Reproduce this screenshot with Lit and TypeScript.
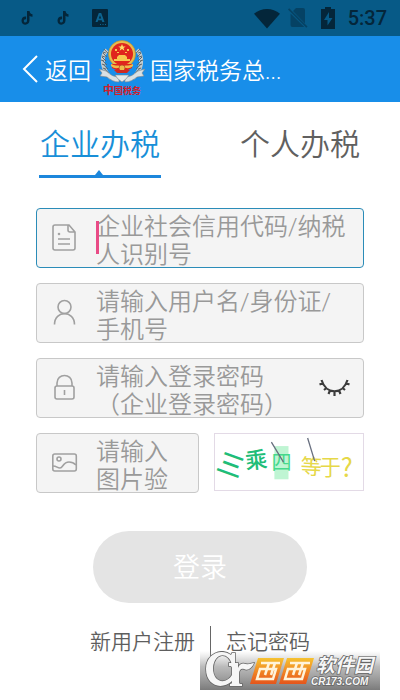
import { LitElement, html, css, svg } from "lit";
import { customElement, property, state } from "lit/decorators.js";
import { classMap } from "lit/directives/class-map.js";

const fonts = css`Roboto, "Noto Sans CJK SC", sans-serif`;

@customElement("status-bar")
class StatusBar extends LitElement {
  static styles = css`
    :host {
      display: flex;
      align-items: center;
      justify-content: space-between;
      height: 36px;
      padding: 0 13px 0 20px;
      background: #075a87;
      color: #04263a;
      font: 500 20px/36px ${fonts};
    }
    .group { display: flex; align-items: center; }
    .apps { gap: 22px; }
    .system { gap: 8px; }
    svg { display: block; fill: currentColor; }
    .dim { opacity: 0.45; }
    .letter { fill: #0d6490; }
  `;

  render() {
    const note = html`<svg width="14" height="16" viewBox="0 0 14 16" aria-hidden="true">
      <path d="M7 1h2.500c.2 2 1.300 3 3 3.200v2.500c-1.200 0-2.200-.4-3-1v4.600c0 5.700-8 5.700-8 .4 0-2.900 2.100-4.500 4.600-4.100v2.600c-3.100-.6-2.700 3.400-.7 3.200 1.100 0 1.600-.8 1.600-2z" />
    </svg>`;
    return html`
      <div class="group apps">
        ${note}${note}
        <svg width="16" height="18" viewBox="0 0 16 18" aria-hidden="true">
          <rect width="16" height="18" rx="1" />
          <path class="letter" d="M6.800 4h2.400l3.300 9h-2.200l-.6-1.800H6.200L5.600 13H3.500zM8 6.200 6.800 9.600h2.400zM8 15h1v1H8zM10.500 15h1v1h-1zM13 15h1v1h-1z" />
        </svg>
      </div>
      <div class="group system">
        <svg width="26" height="21" viewBox="0 0 27 21" aria-hidden="true">
          <path d="M0 5.500C7.500-1 19.500-1 27 5.500L13.500 21z" />
        </svg>
        <svg class="dim" width="20" height="20" viewBox="0 0 20 20" aria-hidden="true">
          <path d="M8 0h7q2 0 2 2v13.500L5 3zM2.500 5.500 16.300 19H4.500q-2 0-2-2z" />
          <path d="m0 1.500 1.200-1.200L19.500 18.500l-1.200 1.200z" />
        </svg>
        <svg width="24" height="22" viewBox="0 0 24 22" aria-hidden="true">
          <path fill-rule="evenodd" d="M9 0h6v2h4v20H5V2h4zM13 5l-5 8h3.500v5.500L16.500 11H13z" />
        </svg>
        <span class="time">5:37</span>
      </div>
    `;
  }
}

@customElement("tax-emblem")
class TaxEmblem extends LitElement {
  static styles = css`
    :host { display: block; }
    svg { display: block; }
    .motto { font: 700 9px "Noto Sans CJK SC", sans-serif; fill: #d0202a; }
    .lead { font-size: 11px; }
  `;

  render() {
    const leaves = [0, 1, 2, 3, 4, 5, 6];
    return html`
      <svg width="48" height="60" viewBox="0 0 48 60" role="img" aria-label="中国税务">
        ${[1, -1].map(
          (side) => svg`<g transform=${`translate(24 0) scale(${side} 1)`}>
            <path d="M15 11c7 7 5 20-4 28" fill="none" stroke="#c3ccd0" stroke-width="4" />
            ${leaves.map((i) => {
              const y = 11 + i * 4;
              const x = 19 - Math.abs(i - 2) * 0.9;
              return svg`<path d=${`M${x - 3} ${y + 3}l4-4M${x - 1} ${y + 3}l3-1`} stroke="#5b6669" stroke-width="1" />`;
            })}
            <path d="M3 38c7 0 10-4 13-6l7-2-3 4 2 3-7 1c-4 3-7 5-12 5z" fill="#d9e0e3" stroke="#7c878b" stroke-width=".6" />
          </g>`
        )}
        <path d="M17 36h14l-3 4-4 3-4-3z" fill="#e5e9e9" stroke="#788388" stroke-width=".6" />
        <circle cx="24" cy="15" r="13.500" fill="#e8bd4c" stroke="#c08a2a" stroke-width=".6" />
        <circle cx="24" cy="15" r="11" fill="#e0261d" />
        <path d="m24 5 1 2.500h2.700l-2.200 1.600.9 2.600-2.400-1.600-2.400 1.600.9-2.600-2.200-1.600H23z" fill="#ffe16a" />
        <path d="M17 10h2v2h-2zM29 10h2v2h-2zM19 13h2v1h-2zM27 13h2v1h-2zM19 18l2-2h6l2 2v2H19zM16 20h16v2H16z" fill="#f7c94f" />
        <path d="M14 25h20v4l-4 2H18l-4-2z" fill="#e0261d" />
        <path d="M13 25c3 2 7 1 9 2h4c2-1 6 0 9-2v2c-3 3-6 2-8 2h-6c-2 0-5 1-8-2z" fill="#eebd4a" />
        <circle cx="24" cy="29" r="3" fill="#eebd4a" stroke="#b3402a" stroke-width=".7" />
        <path d="M16 31h16l-3 3H19z" fill="#cf2a20" />
        <text class="motto" x="24" y="55" text-anchor="middle"><tspan class="lead">中</tspan>国税务</text>
      </svg>
    `;
  }
}

const icons: Record<string, unknown> = {
  document: svg`<path d="M4 1h13l6 7v16q0 2-2 2H3q-2 0-2-2V3q0-2 2-2zM16 1v5q0 2 2 2h5M6 15h12M6 20h12" /><circle cx="7" cy="10" r=".5" />`,
  user: svg`<circle cx="12.500" cy="8" r="6.500" /><path d="M2.500 25.500C2.500 11 22.500 11 22.500 25.500" />`,
  lock: svg`<rect x="3" y="12" width="19" height="13" rx="2" /><path d="M5 12V9c0-10 15-10 15 0v3M12.500 16v5" />`,
  picture: svg`<rect x=".8" y="5" width="23.500" height="17" rx="2" /><circle cx="7" cy="10" r="2" /><path d="M1 17c4 0 4 2 7 2s3-6 9-6c3 0 5 1 7 3" />`,
};

@customElement("form-field")
class FormField extends LitElement {
  @property() icon = "document";
  @property() hint = "";
  @property({ type: Boolean }) secret = false;
  @property({ type: Boolean, reflect: true }) current = false;
  @state() private revealed = false;

  static styles = css`
    :host { display: block; min-width: 0; }
    .box {
      position: relative;
      display: flex;
      box-sizing: border-box;
      height: 60px;
      padding-right: 12px;
      border: 1px solid #c8c8c8;
      border-radius: 4px;
      background: #f4f4f4;
      overflow: hidden;
    }
    .active { border-color: #2b8cb8; }
    .icon {
      flex: none;
      display: grid;
      place-items: center;
      width: 55px;
    }
    svg { display: block; fill: none; stroke: #a0a0a0; stroke-width: 1.6; }
    .entry {
      flex: 1;
      min-width: 0;
      margin: 0 0 0 4px;
      padding: 4px 0 0;
      border: 0;
      outline: 0;
      resize: none;
      overflow: hidden;
      background: none;
      color: #333;
      font: 350 24px/28px ${fonts};
    }
    .entry::placeholder { color: #999; opacity: 1; }
    .masked { -webkit-text-security: disc; }
    .caret {
      position: absolute;
      left: 59px;
      top: 12px;
      width: 3px;
      height: 33px;
      background: #e94b86;
    }
    .secret { padding-right: 10px; }
    .eye {
      flex: none;
      width: 34px;
      padding: 0;
      border: 0;
      background: none;
    }
    .eye svg { stroke: #3c3c3c; stroke-width: 2.200; }
  `;

  render() {
    return html`
      <div class=${classMap({ box: true, active: this.current, secret: this.secret })}>
        <label class="icon" for="entry">
          <svg width="26" height="28" viewBox="0 0 26 28" aria-hidden="true">${icons[this.icon]}</svg>
        </label>
        <textarea
          id="entry"
          class=${classMap({ entry: true, masked: this.secret && !this.revealed })}
          rows="2"
          aria-label=${this.hint}
          placeholder=${this.hint}
        ></textarea>
        ${this.current ? html`<span class="caret"></span>` : ""}
        ${this.secret
          ? html`<button class="eye" type="button" aria-label="显示密码" @click=${() => (this.revealed = !this.revealed)}>
              <svg width="32" height="18" viewBox="0 0 32 18" aria-hidden="true">
                <path d="M2.500 1C7 16 24 16 28.500 1M.5 5.500l4-1.500M5 11l3-2.500M9.500 15l1.500-3.500M15.500 17v-5M21.500 15 20 11.500M26 11 23 8.500M30.500 5.500l-4-1.500" />
              </svg>
            </button>`
          : ""}
      </div>
    `;
  }
}

@customElement("captcha-picture")
class CaptchaPicture extends LitElement {
  static styles = css`
    :host { display: block; }
    .frame {
      display: block;
      box-sizing: border-box;
      width: 100%;
      padding: 0;
      border: 1px solid #e3dae6;
      background: #fff;
    }
    svg { display: block; width: 100%; }
    text { font-family: "Noto Sans CJK SC", sans-serif; }
    .green { fill: #20bd78; }
    .mint { fill: #45d98b; }
    .yellow { fill: #e6d848; }
  `;

  render() {
    return html`
      <button class="frame" type="button" aria-label="换一张">
        <svg viewBox="0 0 147 56" aria-hidden="true">
          <text class="green" x="3" y="40" font-size="26" font-weight="500" transform="rotate(20 16 30)">三</text>
          <text class="green" x="30" y="34" font-size="22" font-weight="500" transform="rotate(-6 40 28)">乘</text>
          <rect x="59" y="12" width="14" height="33" fill="#bff5d3" />
          <text class="mint" x="56" y="36" font-size="20">四</text>
          <text class="yellow" x="85" y="40" font-size="21" transform="rotate(3 95 33)">等</text>
          <text class="yellow" x="104" y="41" font-size="21">于</text>
          <text class="yellow" x="125" y="43" font-size="25">?</text>
          <path d="m56 8 12 20M92 4l7 23" fill="none" stroke="#697080" stroke-width="1.300" />
        </svg>
      </button>
    `;
  }
}

@customElement("site-stamp")
class SiteStamp extends LitElement {
  static styles = css`
    :host { display: block; }
    svg { display: block; }
    .park { font: italic 700 19px/19px "Noto Sans CJK SC", sans-serif; }
    .site { font: italic 700 10px/10px "Liberation Sans", sans-serif; }
    .pale { fill: #f6f6f6; stroke: #666; stroke-width: 1.5; paint-order: stroke; }
  `;

  render() {
    return html`
      <svg width="180" height="39" viewBox="0 0 180 39" role="img" aria-label="西西软件园 CR173.COM">
        <defs>
          <linearGradient id="shade" x2="0" y2="1">
            <stop offset="0" stop-color="#bbb" stop-opacity="0" />
            <stop offset=".4" stop-color="#aaa" stop-opacity=".8" />
            <stop offset="1" stop-color="#7b7b7b" />
          </linearGradient>
          <linearGradient id="fire" x2="0" y2="1">
            <stop offset="0" stop-color="#f6c331" />
            <stop offset=".6" stop-color="#ef7d22" />
            <stop offset="1" stop-color="#e4551c" />
          </linearGradient>
        </defs>
        <rect width="180" height="39" fill="url(#shade)" />
        <path class="pale" d="M35 2v12h-3C29 0 14 1 13 17c0 15 13 17 19 7v-6c0-3-1-3-3-3v-3h9v5c2-5 5-5 8-4 3 1 5-1 8-1-2 5-6 8-10 6-3-1-5 1-5 5v8c0 2 1 2 3 2v2H30v-2c2 0 2-1 2-3C21 40 6 34 6 18 6 2 22-3 31 4l1-2z" />
        <path d="M58 7h26l-8 26H50zM87 7h27l-8 26H79z" fill="url(#fire)" />
        <path d="M61 12h19M90 12h20M69 12l-4 12M75 12l-4 12M97 12l-4 12M103 12l-4 12M60 18h16l-3 10H57zM88 18h17l-3 10H85z" fill="none" stroke="#fff4db" stroke-width="2.500" />
        <text class="pale park" x="116" y="21">软件园</text>
        <text class="pale site" x="111" y="34">CR173.COM</text>
      </svg>
    `;
  }
}

@customElement("app-root")
class AppRoot extends LitElement {
  @state() private tab = 0;

  static styles = css`
    :host {
      display: block;
      min-height: 100vh;
      background: #fff;
      font-family: ${fonts};
      font-weight: 350;
    }
    .header {
      display: flex;
      align-items: center;
      height: 66px;
      padding-left: 22px;
      background: #188ee9;
      color: #fff;
      font-size: 23px;
    }
    .back {
      display: flex;
      align-items: center;
      gap: 7px;
      padding: 0;
      border: 0;
      background: none;
      color: inherit;
      font: inherit;
    }
    .emblem { margin: 0 4px 0 7px; }
    .title {
      margin: 0;
      white-space: nowrap;
      font: inherit;
    }
    .tabs {
      display: flex;
      justify-content: space-between;
      padding: 20px 39px 0;
    }
    .tab {
      position: relative;
      width: 122px;
      height: 56px;
      padding: 0 0 7px;
      border: 0;
      border-bottom: 3px solid transparent;
      background: none;
      color: #606060;
      font: 350 30px/46px ${fonts};
      white-space: nowrap;
    }
    .chosen { border-color: #1c87dc; color: #188fd8; }
    .chosen::after {
      content: "";
      position: absolute;
      left: 50%;
      bottom: 0;
      margin-left: -5px;
      border: 4px solid transparent;
      border-top: 0;
      border-bottom-width: 5px;
      border-bottom-color: #1c87dc;
    }
    .form {
      display: grid;
      gap: 15px;
      padding: 30px 36px 0;
    }
    .pair {
      display: grid;
      grid-template-columns: 163fr 150fr;
      gap: 15px;
    }
    .login {
      justify-self: center;
      width: 65%;
      min-width: 214px;
      height: 72px;
      margin-top: 23px;
      border: 0;
      border-radius: 36px;
      background: #e4e4e4;
      color: #fff;
      font: 350 27px/72px ${fonts};
    }
    .links {
      position: relative;
      display: flex;
      justify-content: center;
      margin-top: 23px;
      font-size: 21px;
      line-height: 32px;
    }
    .link { padding: 0 15px; color: #5e5e5e; text-decoration: none; }
    .link + .link { border-left: 1px solid #666; }
    .stamp { position: absolute; right: 20px; top: 25px; }
  `;

  render() {
    return html`
      <status-bar></status-bar>
      <header class="header">
        <button class="back" type="button">
          <svg width="16" height="28" viewBox="0 0 16 28" aria-hidden="true">
            <path d="M15 1 2 14l13 13" fill="none" stroke="#fff" stroke-width="2" />
          </svg>
          返回
        </button>
        <tax-emblem class="emblem"></tax-emblem>
        <h1 class="title">国家税务总...</h1>
      </header>
      <main>
        <nav class="tabs">
          ${["企业办税", "个人办税"].map(
            (name, i) => html`<button
              type="button"
              class=${classMap({ tab: true, chosen: this.tab === i })}
              @click=${() => (this.tab = i)}
            >${name}</button>`
          )}
        </nav>
        <form class="form">
          <form-field icon="document" .hint=${"企业社会信用代码/纳税\n人识别号"} current></form-field>
          <form-field icon="user" .hint=${"请输入用户名/身份证/\n手机号"}></form-field>
          <form-field icon="lock" .hint=${"请输入登录密码\n（企业登录密码）"} secret></form-field>
          <div class="pair">
            <form-field icon="picture" .hint=${"请输入\n图片验"}></form-field>
            <captcha-picture></captcha-picture>
          </div>
          <button class="login" type="button">登录</button>
        </form>
        <div class="links">
          <a class="link" href="#register">新用户注册</a>
          <a class="link" href="#forgot">忘记密码</a>
          <site-stamp class="stamp"></site-stamp>
        </div>
      </main>
    `;
  }
}
